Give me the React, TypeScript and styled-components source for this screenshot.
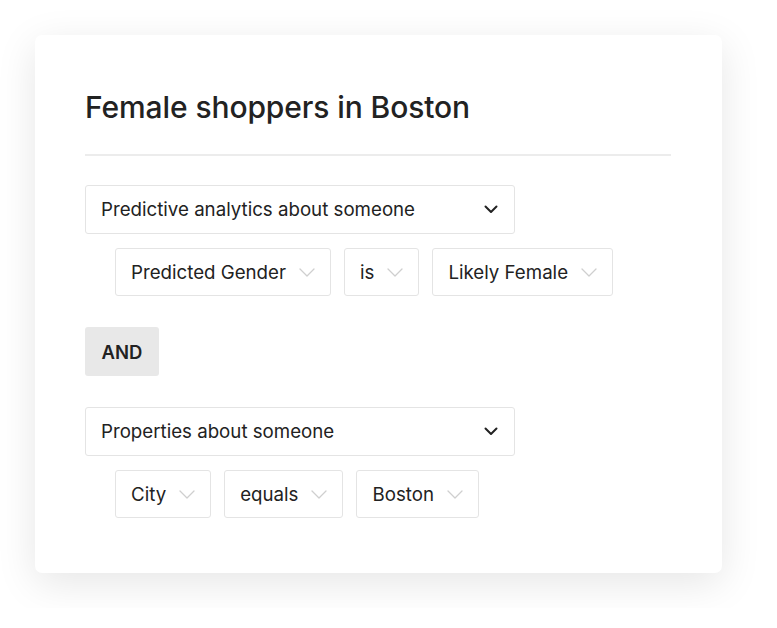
import React from 'react';
import styled, { createGlobalStyle } from 'styled-components';

const GlobalStyle = createGlobalStyle`
  body {
    margin: 0;
    background: #ffffff;
    font-family: Inter, "Liberation Sans", sans-serif;
    color: #222222;
  }
`;

const Page = styled.div`
  padding: 35px;
`;

const Card = styled.div`
  width: 687px;
  height: 538px;
  box-sizing: border-box;
  background: #fff;
  border-radius: 7px;
  box-shadow: 0 10px 40px rgba(0, 0, 0, 0.1);
  padding: 50px 51px 0 50px;
`;

const Title = styled.h1`
  margin: 0;
  font-size: 30px;
  line-height: 44px;
  font-weight: 500;
  letter-spacing: -0.1px;
  color: #222;
`;

const Divider = styled.hr`
  margin: 25px 0 29px;
  border: none;
  height: 2px;
  background: #ececec;
`;

const Group = styled.div`
  display: flex;
  flex-direction: column;
  gap: 14px;
`;

const Select = styled.div<{ $width?: number }>`
  display: flex;
  align-items: center;
  justify-content: space-between;
  box-sizing: border-box;
  height: 49px;
  width: ${(p) => (p.$width ? `${p.$width}px` : 'auto')};
  padding: 0 16px 0 15px;
  border: 1px solid #e4e4e4;
  border-radius: 3px;
  font-size: 18.7px;
  color: #222;
  background: #fff;
`;

const Row = styled.div`
  display: flex;
  gap: 13px;
  padding-left: 30px;
`;

const Chip = styled(Select)`
  height: 48px;
  gap: 13px;
  padding: 0 15px 0 15px;
`;

const AndButton = styled.div`
  display: inline-flex;
  align-items: center;
  justify-content: center;
  width: 74px;
  height: 49px;
  margin: 31px 0 31px;
  background: #e8e8e8;
  border-radius: 3px;
  font-size: 18.5px;
  font-weight: 600;
  color: #222;
`;

const Chevron: React.FC<{ light?: boolean }> = ({ light }) => (
  <svg width={light ? 16 : 14} height="9" viewBox={light ? '0 0 16 9' : '0 0 14 9'} fill="none">
    {light ? (
      <path d="M1 1l7 7 7-7" stroke="#cfcfcf" strokeWidth="1.3" strokeLinecap="round" strokeLinejoin="round" />
    ) : (
      <path d="M1.5 1.5L7 7l5.5-5.5" stroke="#222" strokeWidth="2" strokeLinecap="round" strokeLinejoin="round" />
    )}
  </svg>
);

const App: React.FC = () => {
  return (
    <>
      <GlobalStyle />
      <Page>
        <Card>
          <Title>Female shoppers in Boston</Title>
          <Divider />
          <Group>
            <Select $width={430}>
              Predictive analytics about someone
              <Chevron />
            </Select>
            <Row>
              <Chip>Predicted Gender<Chevron light /></Chip>
              <Chip>is<Chevron light /></Chip>
              <Chip>Likely Female<Chevron light /></Chip>
            </Row>
          </Group>
          <AndButton>AND</AndButton>
          <Group>
            <Select $width={430}>
              Properties about someone
              <Chevron />
            </Select>
            <Row>
              <Chip>City<Chevron light /></Chip>
              <Chip>equals<Chevron light /></Chip>
              <Chip>Boston<Chevron light /></Chip>
            </Row>
          </Group>
        </Card>
      </Page>
    </>
  );
};

export default App;
